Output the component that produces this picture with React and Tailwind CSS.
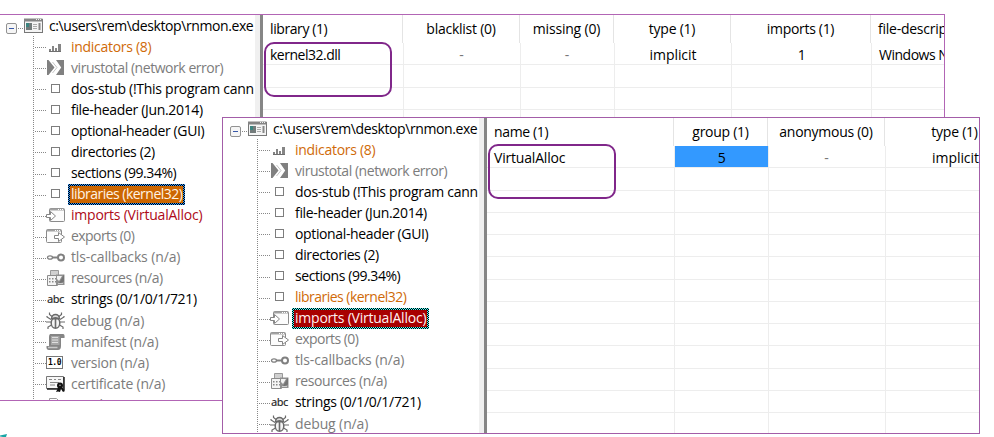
import { useLayoutEffect, useRef, useState } from "react";

// Text run tracked so that its advance equals a fixed column measure.
function Fit({ w, children }) {
  const ref = useRef(null);
  const [tracking, setTracking] = useState(0);
  useLayoutEffect(() => {
    ref.current.style.letterSpacing = "0px";
    const natural = ref.current.getBoundingClientRect().width;
    const next = (w + 0.3 - natural) / children.length;
    ref.current.style.letterSpacing = `${next}px`;
    setTracking(next);
  }, [w, children]);
  return (
    <span ref={ref} className="inline-block whitespace-pre" style={{ letterSpacing: `${tracking}px` }}>
      {children}
    </span>
  );
}

const glyphs = {
  bars: (
    <g fill="#858585">
      <path d="M3 11h2v3H3zM6 8h2v6H6zM9 10h2v4H9zM12 6h3v8h-3z" />
      <path d="M3 13h12v1H3z" fill="#6f6f6f" />
    </g>
  ),
  virustotal: (
    <g>
      <path d="M1 1h17v15H1z" fill="#808080" />
      <path d="M2.500 1H10l5.200 7.500L10 16H2.500l6-7.500z" fill="#fff" />
      <path d="M6.500 3l4.500 5.500L6.500 14" fill="none" stroke="#c4c4c4" />
    </g>
  ),
  box: <rect x="5.500" y="4.500" width="8" height="8" fill="#fff" stroke="#7d7d7d" />,
  imports: (
    <g>
      <rect x="3.500" y="2.500" width="15" height="13" rx="1" fill="#fcfcfc" stroke="#8b8b8b" />
      <path d="M4 3.500h14" stroke="#a2a2a2" strokeWidth="2" />
      <path d="M12 3.500h1M14 3.500h1M16 3.500h1" stroke="#fff" />
      <path d="M.5 8.500h4v-3l5 4.500-5 4.500v-3h-4z" fill="#fff" stroke="#858585" />
    </g>
  ),
  exports: (
    <g>
      <rect x=".5" y="2.500" width="15" height="13" rx="1" fill="#fcfcfc" stroke="#8b8b8b" />
      <path d="M1 3.500h14" stroke="#a2a2a2" strokeWidth="2" />
      <path d="M9 3.500h1M11 3.500h1M13 3.500h1" stroke="#fff" />
      <path d="M8.500 8.500h4v-3l6 4.500-6 4.500v-3h-4z" fill="#fff" stroke="#858585" />
    </g>
  ),
  tls: (
    <g fill="none" stroke="#808080">
      <ellipse cx="4" cy="9.500" rx="2.500" ry="1.700" strokeWidth="1.300" />
      <path d="M6.500 9.500h5.500" strokeWidth="2" />
      <circle cx="15" cy="9.500" r="3" strokeWidth="2" />
    </g>
  ),
  resources: (
    <g>
      <path d="M4.500 1.500h8v12h-8z" fill="#d0d0d0" stroke="#999" />
      <path d="M1.500 6.500h10v10h-10z" fill="#f4f4f4" stroke="#8c8c8c" />
      <path d="M3 9h1.500v1.500H3zM6 9h1.500v1.500H6zM9 9h1.500v1.500H9zM3 12h1.500v1.500H3zM6 12h1.500v1.500H6zM9 12h1.500v1.500H9z" fill="#888" />
      <path d="M10 5.500h8.500V16H10z" fill="#909090" />
      <path d="M11 7h5l-3 5-2-2z" fill="#f2f2f2" />
      <path d="M18 5.500v7L12.500 15z" fill="#747474" />
      <path d="M12 14h5v1h-5z" fill="#ccc" />
    </g>
  ),
  debug: (
    <g fill="none" stroke="#6a6a6a">
      <path d="M6 4.500L3.500 2.500V.5M13 4.500l2.500-2V.5M5 10H0M14 10h5M5.500 13L2 15v2M13.500 13l3.500 2v2M5 7.500L1 5V4M14 7.500L18 5V4" strokeWidth="1.200" />
      <path d="M5.500 6.500q.5-4 4-4t4 4z" fill="#ddd" strokeWidth="1.300" />
      <ellipse cx="9.500" cy="11" rx="4.300" ry="5.300" fill="#f5f5f5" strokeWidth="1.500" />
      <path d="M5.500 6.700h8M9.500 7v9" strokeWidth="1.600" />
    </g>
  ),
  manifest: (
    <g>
      <path d="M4 1h13q2 0 1.500 4H15v8q0 4-3 4H3q-3 0-2.500-4H3V4q0-2 1-3z" fill="#858585" />
      <path d="M5 3h8.500v9H5z" fill="#a6a6a6" />
      <path d="M6 4.500h6M6 7h6M6 9.500h6" stroke="#dedede" />
      <path d="M2 14.500h9.500" stroke="#c8c8c8" strokeWidth="1.500" />
    </g>
  ),
  certificate: (
    <g>
      <path d="M.5 1.500h17v12H.5z" fill="#f7f7f7" stroke="#777" />
      <path d="M18 2v13M1 14h11" stroke="#222" strokeWidth="1.500" />
      <path d="M3 4.500h3M8 4.500h2M12 4.500h3M4 7.500h9M4 10h5" stroke="#888" />
      <circle cx="14" cy="10.500" r="3" fill="#111" />
      <path d="M12.500 12l-2.500 5 2-.5 2 .5 1-3 2 3 2-1-3-4z" fill="#111" />
      <circle cx="14" cy="10.300" r=".8" fill="#aaa" />
    </g>
  ),
  page: <path d="M3.500 2.500h7l4 4v11h-11z" fill="#fff" stroke="#999" />,
};

function Icon({ kind }) {
  if (kind === "abc")
    return <span className="block h-[18px] w-[19px] pl-px font-['Noto_Sans'] text-[11px] font-medium leading-[18px] tracking-[-0.6px] text-[#333]">abc</span>;
  if (kind === "version")
    return (
      <span className="flex h-[18px] w-[19px] items-center">
        <span className="block h-[13px] w-[17px] border border-[#777] bg-white text-center font-['DejaVu_Sans_Mono'] text-[8px] font-bold leading-[11px] tracking-[-0.5px] text-black">1.0</span>
      </span>
    );
  return <svg className="block h-[18px] w-[19px]" viewBox="0 0 19 18">{glyphs[kind]}</svg>;
}

const entries = [
  ["bars", "indicators (8)", 80, "warn"],
  ["virustotal", "virustotal (network error)", 152, "off"],
  ["box", "dos-stub (!This program cann", 182.5, "on"],
  ["box", "file-header (Jun.2014)", 131.5, "on"],
  ["box", "optional-header (GUI)", 133, "on"],
  ["box", "directories (2)", 83.5, "on"],
  ["box", "sections (99.34%)", 105, "on"],
  ["box", "libraries (kernel32)", 111, "warn"],
  ["imports", "imports (VirtualAlloc)", 131, "bad"],
  ["exports", "exports (0)", 63, "off"],
  ["tls", "tls-callbacks (n/a)", 109, "off"],
  ["resources", "resources (n/a)", 91.5, "off"],
  ["abc", "strings (0/1/0/1/721)", 125.5, "on"],
  ["debug", "debug (n/a)", 73, "off"],
  ["manifest", "manifest (n/a)", 87, "off"],
  ["version", "version (n/a)", 77.5, "off"],
  ["certificate", "certificate (n/a)", 94, "off"],
  ["page", "overlay (n/a)", 79, "off"],
];

const tones = {
  on: "text-black",
  off: "text-[#7c7c7c]",
  warn: "text-[#d06a08]",
  bad: "text-[#ae0a18]",
};

const selections = {
  warn: {
    frame: "bg-[repeating-conic-gradient(#000_0_25%,#3399ff_0_50%)]",
    fill: "bg-[#cc6600] text-[#fff3e4]",
  },
  bad: {
    frame: "bg-[repeating-conic-gradient(#000_0_25%,#55ffff_0_50%)]",
    fill: "bg-[#a80000] text-[#fff0f0]",
  },
};

function TreeRow({ icon, label, w, tone, selected }) {
  return (
    <div className="flex h-[21.08px] shrink-0 items-center">
      <div className="h-px w-[11px] shrink-0 translate-y-px bg-[repeating-linear-gradient(90deg,#888_0_1px,#fff_1px_2px)]" />
      <div className="w-[19px] shrink-0"><Icon kind={icon} /></div>
      {selected ? (
        <div className={`ml-[3px] h-[21px] shrink-0 bg-[length:2px_2px] p-[2px] ${selections[tone].frame}`}>
          <div className={`h-[17px] px-px leading-[16px] ${selections[tone].fill}`}><Fit w={w}>{label}</Fit></div>
        </div>
      ) : (
        <div className={`ml-[6px] shrink-0 leading-[20px] ${tones[tone]}`}><Fit w={w}>{label}</Fit></div>
      )}
    </div>
  );
}

function Tree({ selected, rows, className }) {
  return (
    <div className={`shrink-0 overflow-hidden ${className}`}>
      <div className="flex h-[21px] items-center">
        <svg className="h-[18px] w-[43px] shrink-0" viewBox="0 0 43 18">
          <rect x="6.500" y="6.500" width="10" height="10" rx="1.500" fill="#f5f5f5" stroke="#929292" />
          <path d="M9 11.500h5" stroke="#3858a8" />
          <path d="M18 11.500h6" stroke="#888" strokeDasharray="1 1" />
          <rect x="24.500" y="2.500" width="18" height="13" fill="#f4f4f4" stroke="#777" />
          <path d="M24 3h18.500" stroke="#858585" strokeWidth="3" />
          <path d="M36 2.500h1M38 2.500h1M40 2.500h1" stroke="#eee" />
          <rect x="26" y="6" width="6" height="7" fill="#737b7b" />
          <rect x="26" y="6" width="3" height="4" fill="#3c8580" />
          <path d="M33 7.500h4M33 9.500h4M33 11.500h4" stroke="#aaa" />
          <path d="M39.500 6v7" stroke="#888" strokeWidth="2" />
        </svg>
        <div className="ml-[6px] leading-[20px] text-black"><Fit w={204}>c:\users\rem\desktop\rnmon.exe</Fit></div>
      </div>
      <div className="ml-[33px] flex">
        <div className="w-px shrink-0 bg-[repeating-linear-gradient(180deg,#888_0_1px,#fff_1px_2px)]" />
        <div className="ml-px">
          {entries.slice(0, rows).map(([icon, label, w, tone]) => (
            <TreeRow key={label} icon={icon} label={label} w={w} tone={tone} selected={label.startsWith(selected)} />
          ))}
        </div>
      </div>
    </div>
  );
}

function Splitter() {
  return (
    <div className="flex shrink-0">
      <div className="w-[5px] bg-[#f0f0f0]" />
      <div className="w-[3px] bg-[#868686]" />
    </div>
  );
}

function Cell({ column, body, text, w, fill }) {
  return (
    <div className={`shrink-0 overflow-hidden border-r ${column.width} ${column.align} ${body ? "border-[#ededed]" : "border-[#e4e4e4]"} ${fill ? "bg-[#3399ff]" : ""} ${text === "-" ? "text-[#777]" : ""}`}>
      {text && <Fit w={w}>{text}</Fit>}
    </div>
  );
}

function Table({ columns, blanks }) {
  return (
    <div className="min-w-0 flex-1 overflow-hidden text-black">
      <div className="flex h-[28px] leading-[28px]">
        {columns.map((c) => <Cell key={c.head} column={c} text={c.head} w={c.hw} />)}
      </div>
      <div className="flex h-[22.25px] w-[900px] border-b border-[#ededed] pl-px leading-[23px]">
        {columns.map((c, i) => (
          <Cell key={c.head} body column={i ? c : { ...c, align: c.bodyAlign }} text={c.value} w={c.vw} fill={c.fill} />
        ))}
      </div>
      {Array.from({ length: blanks }, (_, i) => (
        <div key={i} className="flex h-[22.25px] w-[900px] border-b border-[#ededed] pl-px">
          {columns.map((c) => <Cell key={c.head} body column={c} />)}
        </div>
      ))}
    </div>
  );
}

const libraries = [
  { head: "library (1)", hw: 57, value: "kernel32.dll", vw: 70, width: "w-[140px]", align: "pl-[7px]", bodyAlign: "pl-[6px]" },
  { head: "blacklist (0)", hw: 69, value: "-", vw: 5, width: "w-[117px]", align: "text-center" },
  { head: "missing (0)", hw: 67, value: "-", vw: 5, width: "w-[94px]", align: "text-center" },
  { head: "type (1)", hw: 46, value: "implicit", vw: 46.5, width: "w-[117px]", align: "text-center" },
  { head: "imports (1)", hw: 67, value: "1", vw: 7, width: "w-[140px]", align: "text-center" },
  { head: "file-descrip", hw: 68.5, value: "Windows N", vw: 69, width: "w-[160px]", align: "pl-[7px] whitespace-nowrap" },
];

const imports = [
  { head: "name (1)", hw: 54, value: "VirtualAlloc", vw: 71, width: "w-[187px]", align: "pl-[7px]", bodyAlign: "pl-[6px]" },
  { head: "group (1)", hw: 56, value: "5", vw: 7, fill: true, width: "w-[94px]", align: "text-center" },
  { head: "anonymous (0)", hw: 93, value: "-", vw: 5, width: "w-[117px]", align: "text-center" },
  { head: "type (1)", hw: 46, value: "implicit", vw: 46.5, width: "w-[140px]", align: "text-center" },
];

export default function App() {
  return (
    <div className="relative h-[437px] w-[994px] overflow-hidden bg-white font-['Open_Sans','Noto_Sans',sans-serif] text-[14px]">
      <div className="absolute left-0 top-[14px] flex h-[387px] w-[945px] overflow-hidden border-y border-r border-[#b265b5] bg-white">
        <Tree selected="libraries" rows={18} className="w-[255px]" />
        <Splitter />
        <Table columns={libraries} blanks={14} />
      </div>
      <div className="absolute left-[264px] top-[42px] h-[55px] w-[128px] rounded-[10px] border-2 border-[#80278a]" />

      <div className="absolute left-[222px] top-[117px] flex h-[317px] w-[758px] overflow-hidden border border-[#a35da8] bg-white">
        <Tree selected="imports" rows={14} className="-ml-px w-[257px] pl-[2px]" />
        <Splitter />
        <Table columns={imports} blanks={12} />
      </div>
      <div className="absolute left-[488px] top-[144px] h-[55px] w-[128px] rounded-[10px] border-2 border-[#80278a]" />

      <svg className="absolute bottom-0 left-0 h-[3px] w-[8px]" viewBox="0 0 8 3"><path d="M0 1.500L7 0 6 3H3L0 2.500z" fill="#18a5a5" /></svg>
    </div>
  );
}
